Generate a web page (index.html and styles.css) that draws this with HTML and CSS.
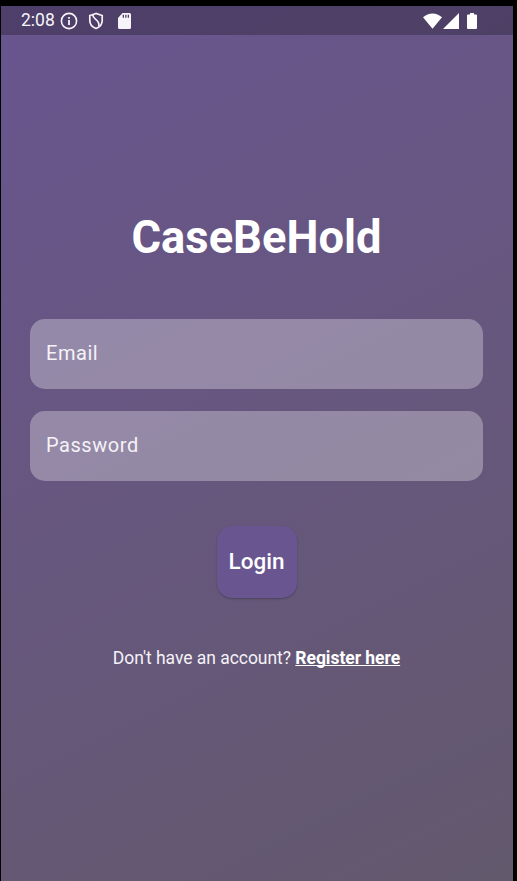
FILE: index.html
```html
<!DOCTYPE html>
<html lang="en">
<head>
<meta charset="utf-8">
<title>CaseBeHold</title>
<link rel="stylesheet" href="styles.css">
</head>
<body>
<div class="phone">
  <header class="status">
    <span class="clock">2:08</span>
    <svg class="info" width="18" height="18" viewBox="0 0 18 18"><circle cx="9" cy="9" r="7.6" fill="none" stroke="currentColor" stroke-width="1.6"/><path d="M8.1 8h1.800v5H8.100zM8.100 5h1.800v1.700H8.100z" fill="currentColor"/></svg>
    <svg class="shield" width="16" height="18" viewBox="0 0 16 18" fill="none" stroke="currentColor" stroke-width="1.7"><path d="M8 1.500 1.800 3.500v5c0 3.700 2.500 6.700 6.200 8 3.700-1.300 6.200-4.300 6.200-8v-5z"/><path d="M4.800 2.800c-.3 5.200 7.400 4.200 6 11.400"/></svg>
    <svg class="card" width="13" height="16" viewBox="0 0 13 16"><path fill="currentColor" fill-rule="evenodd" d="M4.500 0h7A1.500 1.500 0 0 1 13 1.500v13a1.500 1.500 0 0 1-1.500 1.500h-10A1.500 1.500 0 0 1 0 14.500V5zM4.700 1.700v3h1.300v-3zm2.500 0v3h1.300v-3zm2.500 0v3H11v-3z"/></svg>
    <div class="signals">
      <svg width="19" height="16" viewBox="0 0 19 16"><path fill="currentColor" d="M0 4.200C5.400-.9 13.600-.9 19 4.200L9.500 15.700z"/></svg>
      <svg class="cell" width="16" height="16" viewBox="0 0 16 16"><path fill="currentColor" d="M16 0v16H0z"/></svg>
      <svg class="battery" width="10" height="16" viewBox="0 0 10 16"><path fill="currentColor" d="M3 0h4v1.500h2a1 1 0 0 1 1 1V15a1 1 0 0 1-1 1H1a1 1 0 0 1-1-1V2.500a1 1 0 0 1 1-1h2z"/></svg>
    </div>
  </header>
  <main class="login">
    <h1 class="title">CaseBeHold</h1>
    <input class="field" type="text" placeholder="Email" aria-label="Email">
    <input class="field" type="password" placeholder="Password" aria-label="Password">
    <button class="submit">Login</button>
    <p class="signup">Don't have an account? <a class="register" href="#">Register here</a></p>
  </main>
</div>
</body>
</html>
```
FILE: styles.css
```css
* { box-sizing: border-box; }
body {
  margin: 0;
  height: 881px;
  padding: 6px 4px 0 1px;
  overflow: hidden;
  background: #000;
  font-family: Roboto, sans-serif;
  color: #fff;
}
.phone {
  height: 875px;
  background: linear-gradient(154deg, #69558f, #63596d);
}
.status {
  display: flex;
  align-items: center;
  height: 29px;
  padding: 0 36px 0 20px;
  background: rgba(0, 0, 0, .25);
  color: #f6f4f8;
}
.clock { width: 39px; font-size: 17.5px; line-height: 31px; }
.shield { margin-left: 10px; }
.card { margin-left: 14px; }
.signals { display: flex; align-items: center; margin-left: auto; color: #fff; }
.cell { margin-left: 1px; }
.battery { margin-left: 8px; }
.login {
  display: flex;
  flex-direction: column;
  align-items: center;
  padding: 173px 30px 0 29px;
}
.title { margin: 0 0 50.5px; font-size: 45.3px; line-height: 60px; font-weight: 700; }
.field {
  width: 100%;
  height: 70px;
  margin-bottom: 22px;
  padding: 0 16px 2px;
  border: 0;
  border-radius: 15px;
  background: rgba(255, 255, 255, .3);
  color: #fff;
  font: 400 20px Roboto, sans-serif;
  letter-spacing: .55px;
}
.field::placeholder { color: #f5f2f8; opacity: 1; }
.submit {
  width: 80px;
  height: 72px;
  margin: 23px 0 48.5px;
  padding: 0 0 1px;
  border: 0;
  border-radius: 15px;
  background: #69558f;
  box-shadow: 0 1px 2px rgba(0, 0, 0, .25);
  color: #fff;
  font: 500 22.5px Roboto, sans-serif;
}
.signup { margin: 0; font-size: 17.5px; letter-spacing: -.04px; line-height: 24px; white-space: nowrap; color: #f5f2f8; }
.register { font-weight: 700; color: #fff; text-decoration: underline; text-decoration-thickness: 1px; text-underline-offset: 1px; text-decoration-skip-ink: none; }
```
